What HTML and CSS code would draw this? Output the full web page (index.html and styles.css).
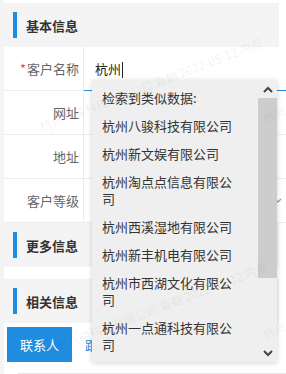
FILE: index.html
```html
<!DOCTYPE html>
<html lang="zh-CN">
<head>
  <meta charset="UTF-8">
  <meta name="viewport" content="width=device-width, initial-scale=1.0">
  <title>客户信息</title>
  <link rel="stylesheet" href="styles.css">
</head>
<body>
  <div class="page">
    <div class="sec-title"><i class="bar"></i>基本信息</div>
    <div class="form">
      <div class="row">
        <div class="label"><span class="req">*</span>客户名称</div>
        <div class="field field-focus">杭州<span class="caret"></span></div>
      </div>
      <div class="row">
        <div class="label">网址</div>
        <div class="field"></div>
      </div>
      <div class="row">
        <div class="label">地址</div>
        <div class="field"></div>
      </div>
      <div class="row">
        <div class="label">客户等级</div>
        <div class="field field-select">
          <svg class="sel-arrow" width="8" height="6" viewBox="0 0 8 6"><polyline points="1,1 4,4 7,1" fill="none" stroke="#999" stroke-width="1.2"/></svg>
        </div>
      </div>
    </div>
    <div class="sec-title"><i class="bar"></i>更多信息</div>
    <div class="sec-title sec-gap"><i class="bar"></i>相关信息</div>
    <div class="tabs">
      <div class="tab active">联系人</div>
      <div class="tab">跟进记录</div>
      <div class="tab">商机</div>
    </div>
    <div class="table-line"></div>

    <!-- 联想下拉 -->
    <div class="suggest">
      <ul class="suggest-list">
        <li class="suggest-tip">检索到类似数据:</li>
        <li>杭州八骏科技有限公司</li>
        <li>杭州新文娱有限公司</li>
        <li>杭州淘点点信息有限公司</li>
        <li>杭州西溪湿地有限公司</li>
        <li>杭州新丰机电有限公司</li>
        <li>杭州市西湖文化有限公司</li>
        <li>杭州一点通科技有限公司</li>
      </ul>
      <div class="scroll">
        <div class="scroll-btn">
          <svg width="10" height="7" viewBox="0 0 10 7"><polyline points="1,6 5,2 9,6" fill="none" stroke="#444" stroke-width="2"/></svg>
        </div>
        <div class="scroll-thumb"></div>
        <div class="scroll-space"></div>
        <div class="scroll-btn">
          <svg width="10" height="7" viewBox="0 0 10 7"><polyline points="1,1 5,5 9,1" fill="none" stroke="#444" stroke-width="2"/></svg>
        </div>
      </div>
    </div>

    <!-- 水印 -->
    <div class="watermark">
      <span class="wm wm-1">杭州八骏科技有限公司 袁朗 2022-05-12 内部</span>
      <span class="wm wm-2">杭州八骏科技有限公司 袁朗 2022-05-12 内部</span>
      <span class="wm wm-3">杭州八骏科技有限公司 袁朗 2022-05-12 内部</span>
      <span class="wm wm-4">杭州八骏科技有限公司 袁朗 2022-05-12 内部</span>
    </div>
  </div>
</body>
</html>
```

FILE: styles.css
```css
*{
  margin: 0;
  padding: 0;
  box-sizing: border-box;
}
body{
  font-family: "Noto Sans CJK SC", "Microsoft YaHei", sans-serif;
  font-size: 13px;
  color: #333;
  background-color: #fff;
}
.page{
  position: relative;
  width: 286px;
  height: 374px;
  overflow: hidden;
  padding-top: 3px;
  background: linear-gradient(to right, #f4f4f4 4px, #fff 4px);
}

/* 分组标题 */
.sec-title{
  width: 279px;
  height: 44px;
  display: flex;
  align-items: center;
  gap: 9px;
  padding-left: 13px;
  background-color: #f4f4f4;
  font-weight: bold;
  color: #333;
}
.sec-title .bar{
  width: 4px;
  height: 26px;
  background-color: #1f8ce0;
}
.sec-gap{
  margin-top: 12px;
}

/* 表单 */
.form{
  margin-left: 4px;
}
.row{
  display: flex;
  height: 44px;
  border-bottom: 1px solid #ececec;
}
.label{
  width: 80px;
  padding-right: 4px;
  border-right: 1px solid #ececec;
  text-align: right;
  line-height: 43px;
  color: #666;
}
.label .req{
  color: #f04a3e;
  margin-right: 1px;
}
.field{
  flex: 1;
  padding-left: 11px;
  line-height: 43px;
  color: #222;
}
.field-focus{
  margin-bottom: -1px;
  border-bottom: 1px solid #1f8ce0;
}
.caret{
  display: inline-block;
  width: 1px;
  height: 16px;
  margin-left: 1px;
  vertical-align: middle;
  background-color: #222;
}
.field-select{
  display: flex;
  justify-content: flex-end;
  align-items: center;
  padding-right: 4px;
}

/* 标签页 */
.tabs{
  display: flex;
  margin: 4px 0 0 7px;
}
.tab{
  padding: 0 13px;
  height: 35px;
  line-height: 35px;
  color: #1f8ce0;
  white-space: nowrap;
}
.tab.active{
  background-color: #1f8ce0;
  color: #fff;
}
.table-line{
  margin: 11px 0 0 18px;
  border-top: 1px solid #e6e6e6;
}

/* 下拉联想 */
.suggest{
  position: absolute;
  left: 92px;
  top: 80px;
  width: 185px;
  height: 282px;
  display: flex;
  background-color: #efefef;
  box-shadow: 0 1px 5px rgba(0, 0, 0, 0.18);
  z-index: 2;
}
.suggest-list{
  flex: 1;
  list-style: none;
  overflow: hidden;
  padding: 3px 20px 0 10px;
}
.suggest-list li{
  padding: 5.5px 0;
  line-height: 17px;
  color: #333;
}
.scroll{
  width: 19px;
  display: flex;
  flex-direction: column;
}
.scroll-btn{
  height: 18px;
  display: flex;
  justify-content: center;
  align-items: center;
}
.scroll-thumb{
  height: 180px;
  background-color: #cdcdcd;
}
.scroll-space{
  flex: 1;
}

/* 水印 */
.watermark{
  position: absolute;
  left: 0;
  top: 0;
  right: 0;
  bottom: 0;
  pointer-events: none;
  z-index: 3;
}
.wm{
  position: absolute;
  font-size: 12px;
  white-space: nowrap;
  color: rgba(0, 0, 0, 0.07);
  transform: rotate(-21deg);
  transform-origin: left center;
}
.wm-1{ left: 40px; top: 118px; }
.wm-2{ left: 263px; top: 110px; }
.wm-3{ left: 45px; top: 342px; }
.wm-4{ left: 263px; top: 326px; }
```
